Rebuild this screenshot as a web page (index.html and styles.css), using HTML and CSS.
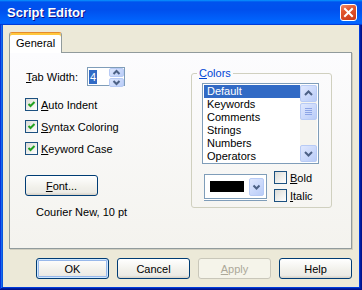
FILE: index.html
```html
<!DOCTYPE html>
<html lang="en">

<head>
    <meta charset="UTF-8">
    <title>Script Editor</title>
    <link rel="stylesheet" href="styles.css">
</head>

<body>
    <div class="window">
        <div class="titlebar">
            <span class="title">Script Editor</span>
            <button class="close">
                <svg width="15" height="15" viewBox="0 0 15 15">
                    <path d="M4 4 L11 11 M11 4 L4 11" stroke="#fff" stroke-width="2" stroke-linecap="square" fill="none" />
                </svg>
            </button>
        </div>

        <div class="client">
            <div class="tabs">
                <div class="tab">General</div>
            </div>

            <div class="page">
                <!-- left column -->
                <div class="left">
                    <div class="tabwidth">
                        <span class="tw-label"><u>T</u>ab Width:</span>
                        <div class="spin">
                            <span class="spin-value">4</span>
                            <div class="spin-btns">
                                <span class="spin-btn">
                                    <svg width="13" height="7" viewBox="0 0 13 7"><polyline points="3.5,5 6.5,2 9.5,5" stroke="#4d6185" stroke-width="2" fill="none" /></svg>
                                </span>
                                <span class="spin-btn">
                                    <svg width="13" height="7" viewBox="0 0 13 7"><polyline points="3.5,2 6.5,5 9.5,2" stroke="#4d6185" stroke-width="2" fill="none" /></svg>
                                </span>
                            </div>
                        </div>
                    </div>

                    <label class="check first"><span class="box checked"></span><span><u>A</u>uto Indent</span></label>
                    <label class="check"><span class="box checked"></span><span><u>S</u>yntax Coloring</span></label>
                    <label class="check"><span class="box checked"></span><span><u>K</u>eyword Case</span></label>

                    <button class="btn font-btn"><u>F</u>ont...</button>
                    <div class="font-name">Courier New, 10 pt</div>
                </div>

                <!-- colors group -->
                <fieldset class="group">
                    <legend><u>C</u>olors</legend>
                    <div class="listbox">
                        <ul class="items">
                            <li class="selected">Default</li>
                            <li>Keywords</li>
                            <li>Comments</li>
                            <li>Strings</li>
                            <li>Numbers</li>
                            <li>Operators</li>
                        </ul>
                        <div class="scrollbar">
                            <span class="sb-btn">
                                <svg width="15" height="15" viewBox="0 0 15 15"><polyline points="4,9 7.5,5.5 11,9" stroke="#4d6185" stroke-width="2" fill="none" /></svg>
                            </span>
                            <div class="track">
                                <span class="thumb">
                                    <svg width="15" height="15" viewBox="0 0 15 15">
                                        <path d="M4 4.5 H11 M4 6.5 H11 M4 8.5 H11 M4 10.5 H11" stroke="#8da5e6" stroke-width="1" />
                                    </svg>
                                </span>
                            </div>
                            <span class="sb-btn">
                                <svg width="15" height="15" viewBox="0 0 15 15"><polyline points="4,6 7.5,9.5 11,6" stroke="#4d6185" stroke-width="2" fill="none" /></svg>
                            </span>
                        </div>
                    </div>

                    <div class="color-row">
                        <div class="combo">
                            <span class="swatch"></span>
                            <span class="drop">
                                <svg width="13" height="16" viewBox="0 0 13 16"><polyline points="3.5,6.5 6.5,9.5 9.5,6.5" stroke="#4d6185" stroke-width="2" fill="none" /></svg>
                            </span>
                        </div>
                        <div class="styles">
                            <label class="check"><span class="box"></span><span><u>B</u>old</span></label>
                            <label class="check"><span class="box"></span><span><u>I</u>talic</span></label>
                        </div>
                    </div>
                </fieldset>
            </div>

            <div class="buttons">
                <button class="btn default">OK</button>
                <button class="btn">Cancel</button>
                <button class="btn disabled"><u>A</u>pply</button>
                <button class="btn">Help</button>
            </div>
        </div>
    </div>
</body>

</html>
```

FILE: styles.css
```css
* {
    margin: 0;
    padding: 0;
    box-sizing: border-box;
}

body {
    font-family: "Liberation Sans", Arial, sans-serif;
    font-size: 11px;
    color: #000;
}

li {
    list-style: none;
}

.window {
    width: 362px;
    height: 290px;
    display: flex;
    flex-direction: column;
    background-color: #0831d9;
    box-shadow: inset -1px -1px #00138c, inset 1px 1px #0831d9, inset -2px -2px #001ea0, inset 2px 2px #166aee, inset -3px -3px #003bda, inset 3px 3px #0855dd;
}

/* title bar */
.titlebar {
    height: 25px;
    display: flex;
    align-items: center;
    padding: 0 5px 0 7px;
    background: linear-gradient(180deg, #0997ff, #0053ee 8%, #0050ee 40%, #06f 88%, #06f 93%, #005bff 95%, #003dd7 96%, #003dd7);
}

.title {
    flex: 1;
    color: #fff;
    font-weight: bold;
    font-size: 13px;
    text-shadow: 1px 1px #0f1089;
}

.close {
    width: 17px;
    height: 17px;
    border: 1px solid #fff;
    border-radius: 3px;
    background: radial-gradient(circle at 90% 90%, #cc4600 0%, #dc6527 55%, #cd7546 70%, #ffccb2 90%, #fff 100%);
    background: linear-gradient(160deg, #f08a6a, #e3572e 35%, #c8391a);
    display: flex;
    align-items: center;
    justify-content: center;
}

/* client area */
.client {
    flex: 1;
    margin: 0 3px 3px;
    padding: 7px 7px 0 6px;
    background-color: #ece9d8;
}

.tabs {
    display: flex;
}

.tab {
    position: relative;
    z-index: 1;
    height: 21px;
    margin-bottom: -1px;
    padding: 0 6px;
    line-height: 19px;
    background-color: #fff;
    border: 1px solid #919b9c;
    border-top-color: #e68b2c;
    border-bottom: none;
    border-radius: 3px 3px 0 0;
    box-shadow: inset 0 2px #ffc73c;
    padding-top: 1px;
}

.page {
    height: 197px;
    display: flex;
    align-items: flex-start;
    padding: 14px 0 0 15px;
    border: 1px solid #919b9c;
    background: linear-gradient(180deg, #fcfcfe, #f4f3ee);
    box-shadow: 1px 1px 0 #d0cebf;
}

/* left column */
.left {
    width: 166px;
    display: flex;
    flex-direction: column;
}

.tabwidth {
    height: 19px;
    display: flex;
    align-items: center;
}

.tw-label {
    width: 61px;
    margin-left: 1px;
}

.spin {
    width: 38px;
    height: 19px;
    display: flex;
    border: 1px solid #7f9db9;
    background-color: #fff;
}

.spin-value {
    height: 14px;
    margin: 2px 0 0 1px;
    padding: 0 1px;
    line-height: 14px;
    background-color: #316ac5;
    color: #fff;
}

.spin-btns {
    margin-left: auto;
    width: 15px;
    display: flex;
    flex-direction: column;
    gap: 1px;
}

.spin-btn {
    flex: 1;
    display: flex;
    align-items: center;
    justify-content: center;
    border-radius: 2px;
    border: 1px solid #b8cbf5;
    background: linear-gradient(135deg, #dde6fd, #bacdf8);
}

.check {
    height: 13px;
    display: flex;
    align-items: center;
    gap: 3px;
    margin-top: 9px;
}

.left .check.first {
    margin-top: 12px;
}

.box {
    width: 13px;
    height: 13px;
    border: 1px solid #1c5180;
    background: linear-gradient(135deg, #dcdcd7, #fff);
}

.box.checked {
    background-image: url("data:image/svg+xml,%3Csvg xmlns='http://www.w3.org/2000/svg' width='11' height='11'%3E%3Cpolyline points='2.5,5 4.5,7 8.5,3' stroke='%2321a121' stroke-width='2' fill='none'/%3E%3C/svg%3E"), linear-gradient(135deg, #dcdcd7, #fff);
}

.btn {
    width: 73px;
    height: 21px;
    font-family: inherit;
    font-size: 11px;
    color: #000;
    border: 1px solid #003c74;
    border-radius: 3px;
    background: linear-gradient(180deg, #fff, #f1f0ea 60%, #ecebe6 86%, #d6d0c5);
}

.font-btn {
    margin-top: 20px;
}

.font-name {
    margin: 10px 0 0 11px;
    line-height: 13px;
}

/* colors group */
.group {
    width: 141px;
    min-width: 0;
    padding: 0 0 5px;
    border: 1px solid #d0d0bf;
    border-radius: 3px;
}

.group legend {
    margin-left: 5px;
    padding: 0 2px;
    line-height: 13px;
    color: #0046d5;
}

.listbox {
    width: 117px;
    height: 81px;
    margin: 3px 0 0 10px;
    padding: 1px;
    display: flex;
    border: 1px solid #7f9db9;
    background-color: #fff;
}

.items {
    flex: 1;
    overflow: hidden;
}

.items li {
    height: 13px;
    line-height: 13px;
    padding-left: 3px;
}

.items .selected {
    background-color: #316ac5;
    color: #fff;
}

.scrollbar {
    width: 17px;
    display: flex;
    flex-direction: column;
    background-color: #f5f4ef;
}

.sb-btn,
.thumb {
    width: 17px;
    height: 17px;
    display: flex;
    align-items: center;
    justify-content: center;
    border: 1px solid #b8cbf5;
    border-radius: 2px;
    background: linear-gradient(135deg, #e0e8fe, #b9ccf8);
}

.track {
    flex: 1;
}

.thumb {
    margin-top: 1px;
}

.color-row {
    display: flex;
    align-items: center;
    gap: 7px;
    margin: 7px 0 0 12px;
}

.combo {
    width: 63px;
    height: 25px;
    display: flex;
    align-items: center;
    padding: 0 2px 0 5px;
    border: 1px solid #7f9db9;
    background-color: #fff;
    box-shadow: 0 1px 0 #fff, 0 2px 0 #7f9db9;
}

.swatch {
    width: 34px;
    height: 11px;
    background-color: #000;
}

.drop {
    margin-left: auto;
    width: 15px;
    height: 18px;
    display: flex;
    align-items: center;
    justify-content: center;
    border: 1px solid #b8cbf5;
    border-radius: 2px;
    background: linear-gradient(135deg, #e0e8fe, #b9ccf8);
}

.styles {
    display: flex;
    flex-direction: column;
    gap: 5px;
}

.styles .check {
    margin-top: 0;
}

/* dialog buttons */
.buttons {
    display: flex;
    justify-content: flex-end;
    gap: 8px;
    margin-top: 9px;
}

.btn.default {
    box-shadow: inset 0 0 0 1px #cee7ff, inset 0 0 0 2px #98b8ea;
}

.btn.disabled {
    color: #aca899;
    border-color: #c9c7ba;
    background: #f5f4ea;
}
```
